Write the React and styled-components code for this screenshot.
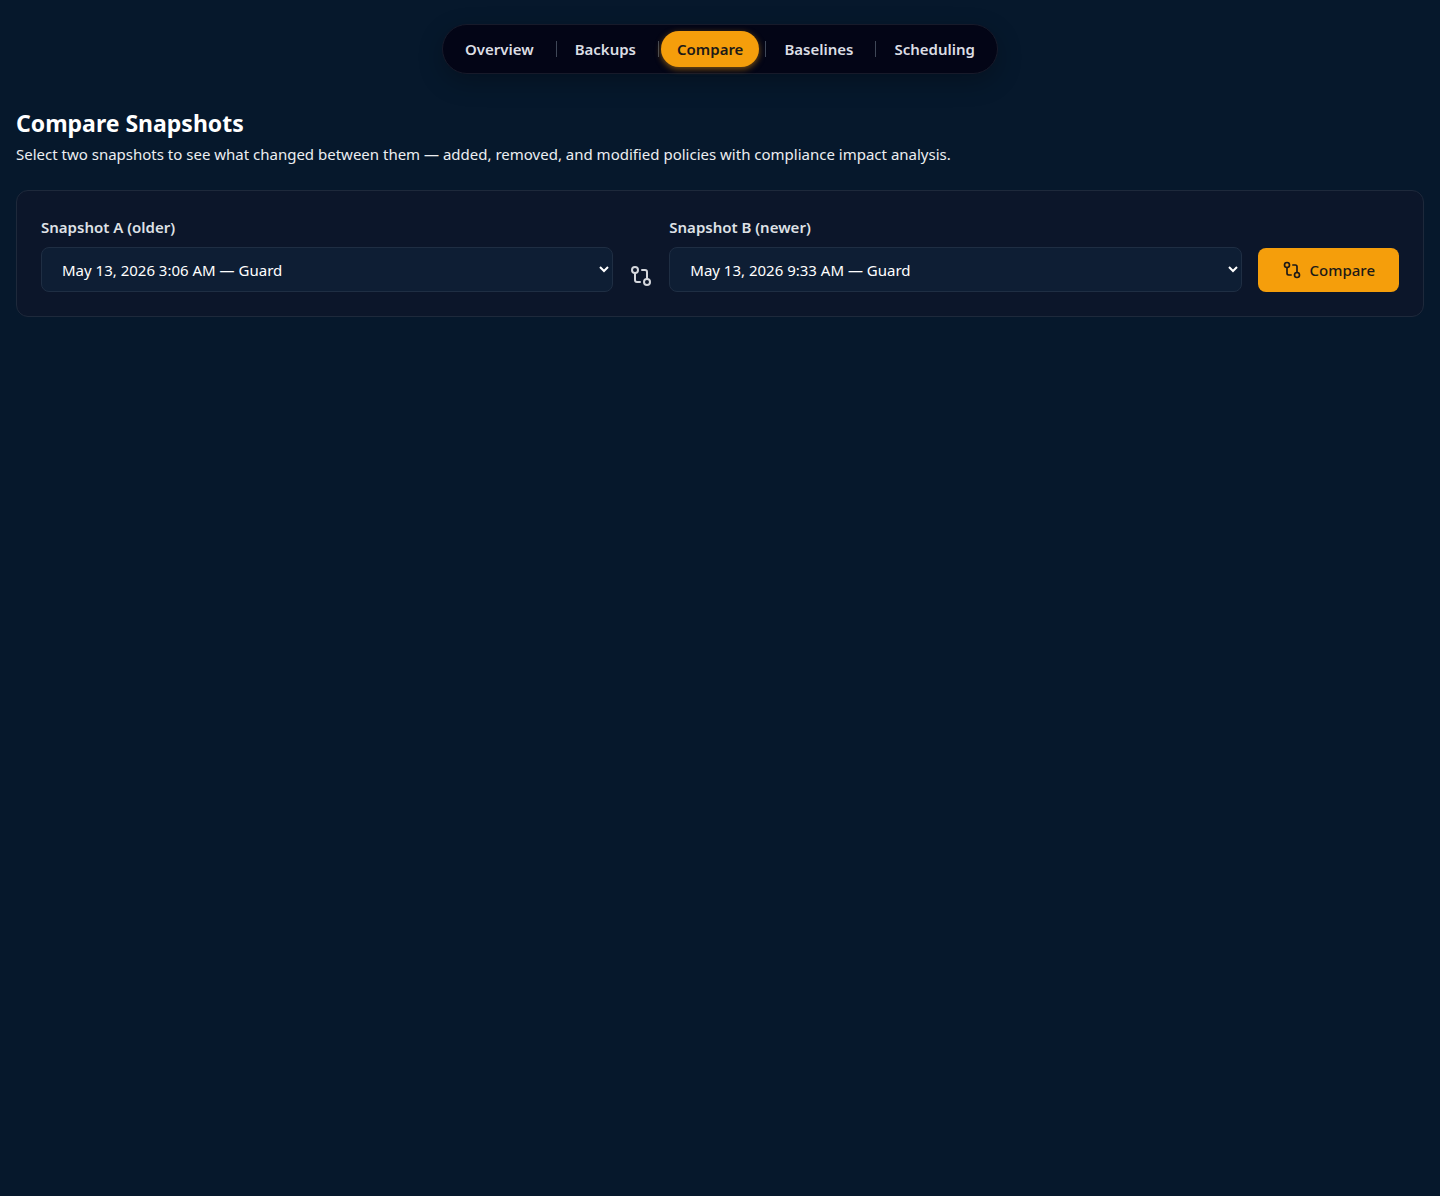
import React, {useState} from 'react';
import styled, {createGlobalStyle, css} from 'styled-components';
import {GitCompare} from 'lucide-react';

const GlobalStyle = createGlobalStyle`
  * {
    box-sizing: border-box;
  }

  body {
    margin: 0;
    background: #06182c;
    color: #ffffff;
    font-family: 'Segoe UI', 'Noto Sans', sans-serif;
    font-size: 15px;
    line-height: 24px;
  }

  button, select {
    font: inherit;
  }
`;

const focusRing = css`
  &:focus-visible {
    outline: 2px solid #fbbf24;
    outline-offset: 2px;
  }
`;

const NavBar = styled.header`
  display: flex;
  justify-content: center;
  padding: 24px 16px;
`;

const TabList = styled.nav`
  display: flex;
  align-items: center;
  padding: 6px;
  border: 1px solid #171a2a;
  border-radius: 25px;
  background: #030516;
  box-shadow: 0 8px 24px rgba(0, 0, 0, 0.25);
`;

const Divider = styled.span`
  width: 1px;
  height: 16px;
  margin: 0 2px 0 6px;
  background: #3f4757;
`;

const Tab = styled.button`
  height: 36px;
  padding: 0 16px;
  border: 0;
  border-radius: 18px;
  background: transparent;
  color: #dcdee4;
  font-weight: 600;
  cursor: pointer;
  ${focusRing}

  ${props => props.$active && css`
    background: #f59e0b;
    color: #1c1917;
    box-shadow: 0 2px 6px rgba(245, 158, 11, 0.5);
  `}
`;

const Page = styled.main`
  padding: 8px 16px;
`;

const Title = styled.h1`
  margin: 0 0 2px;
  font-size: 23px;
  font-weight: 700;
  line-height: 34px;
`;

const Description = styled.p`
  margin: 0 0 24px;
  color: #eceef1;
`;

const Card = styled.form`
  display: flex;
  align-items: flex-end;
  gap: 16px;
  padding: 24px;
  border: 1px solid #1e293b;
  border-radius: 12px;
  background: #0c162a;
`;

const Field = styled.div`
  flex: 1;
  min-width: 0;
`;

const Label = styled.label`
  display: block;
  margin-bottom: 8px;
  color: #dfe1e6;
  font-weight: 600;
`;

const Select = styled.select`
  display: block;
  width: 100%;
  height: 45px;
  padding: 0 0 0 16px;
  border: 1px solid #1f2e43;
  border-radius: 8px;
  background: #0e1e34;
  color: #ffffff;
  ${focusRing}
`;

const Between = styled.div`
  display: flex;
  padding: 4px 0;
  color: #d4d6dc;
`;

const CompareButton = styled.button`
  display: flex;
  align-items: center;
  gap: 8px;
  height: 44px;
  padding: 0 24px;
  border: 0;
  border-radius: 8px;
  background: #f59e0b;
  color: #1c1917;
  font-weight: 500;
  cursor: pointer;
  ${focusRing}
`;

const TABS = ['Overview', 'Backups', 'Compare', 'Baselines', 'Scheduling'];

const SNAPSHOTS = [
  {id: 'older', label: 'May 13, 2026 3:06 AM — Guard'},
  {id: 'newer', label: 'May 13, 2026 9:33 AM — Guard'},
];

function Tabs({current, onSelect}) {
  return (
    <TabList aria-label="Sections">
      {TABS.map((name, i) => (
        <React.Fragment key={name}>
          {i > 0 && <Divider/>}
          <Tab
            type="button"
            $active={name === current}
            aria-current={name === current ? 'page' : undefined}
            onClick={() => onSelect(name)}
          >
            {name}
          </Tab>
        </React.Fragment>
      ))}
    </TabList>
  );
}

function SnapshotField({id, label, value, onChange}) {
  return (
    <Field>
      <Label htmlFor={id}>{label}</Label>
      <Select id={id} value={value} onChange={e => onChange(e.target.value)}>
        {SNAPSHOTS.map(s => <option key={s.id} value={s.id}>{s.label}</option>)}
      </Select>
    </Field>
  );
}

export default function App() {
  const [tab, setTab] = useState('Compare');
  const [a, setA] = useState('older');
  const [b, setB] = useState('newer');

  return (
    <>
      <GlobalStyle/>
      <NavBar>
        <Tabs current={tab} onSelect={setTab}/>
      </NavBar>
      <Page>
        <Title>Compare Snapshots</Title>
        <Description>
          Select two snapshots to see what changed between them — added, removed, and modified policies with compliance impact analysis.
        </Description>
        <Card onSubmit={e => e.preventDefault()}>
          <SnapshotField id="snapshot-a" label="Snapshot A (older)" value={a} onChange={setA}/>
          <Between>
            <GitCompare size={24} aria-hidden="true"/>
          </Between>
          <SnapshotField id="snapshot-b" label="Snapshot B (newer)" value={b} onChange={setB}/>
          <CompareButton type="submit">
            <GitCompare size={20} aria-hidden="true"/>
            Compare
          </CompareButton>
        </Card>
      </Page>
    </>
  );
}
